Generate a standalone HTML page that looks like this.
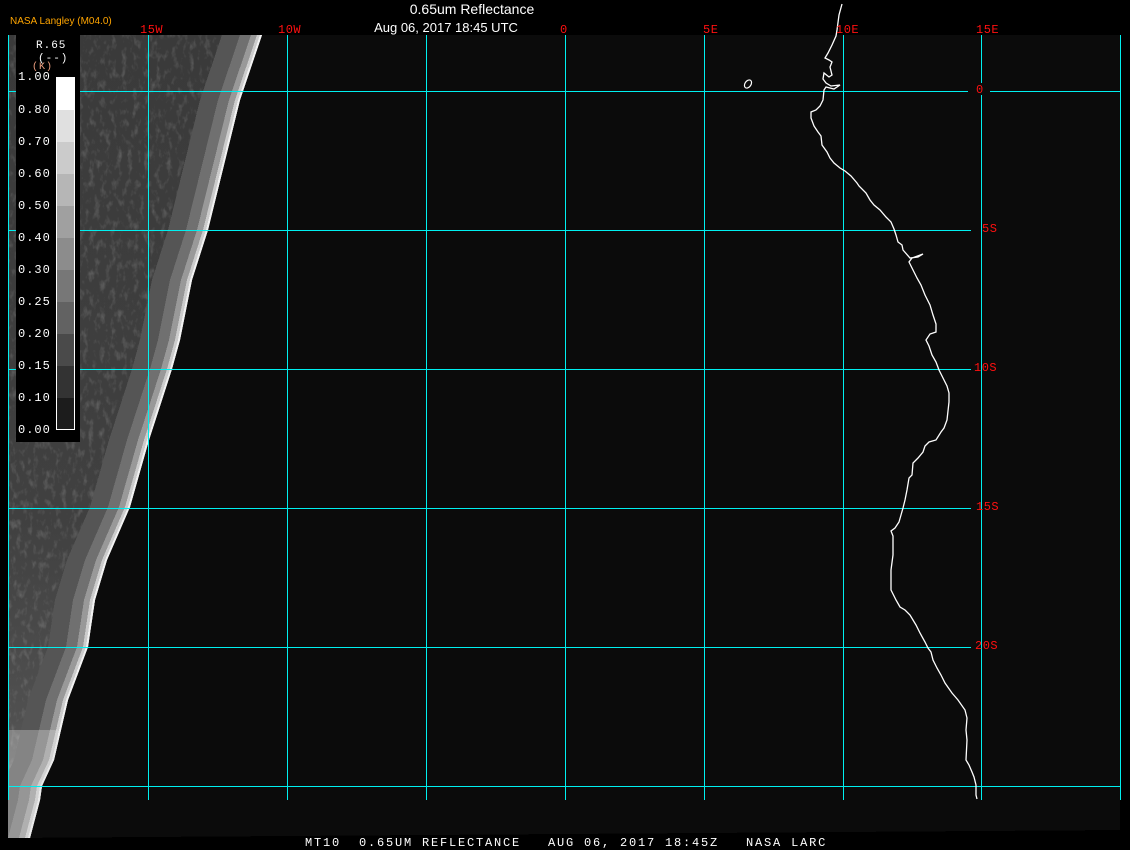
<!DOCTYPE html>
<html><head><meta charset="utf-8"><style>
html,body{margin:0;padding:0;background:#000;}
body{width:1130px;height:850px;position:relative;overflow:hidden;font-family:"Liberation Mono",monospace;}
.t{position:absolute;white-space:pre;}
</style></head><body>
<svg width="1130" height="850" style="position:absolute;left:0;top:0" shape-rendering="crispEdges">
<defs>
<filter id="n" x="0" y="0" width="100%" height="100%">
<feTurbulence type="fractalNoise" baseFrequency="0.18 0.1" numOctaves="3" seed="4"/>
<feColorMatrix type="matrix" values="0 0 0 0 1  0 0 0 0 1  0 0 0 0 1  0 0 0 1.4 -0.7"/>
</filter>
<clipPath id="cl"><polygon points="8,35 262,35 240,100 208,230 192,280 180,340 172,369 162,400 149,440 130,507 107,560 95,600 88,647 68,700 54,760 42,786 40,800 30,838 8,838"/></clipPath>
<linearGradient id="vg" x1="0" y1="0" x2="0" y2="1">
<stop offset="0" stop-color="#3a3a3a"/><stop offset="0.6" stop-color="#404040"/><stop offset="0.85" stop-color="#505050"/><stop offset="1" stop-color="#707070"/>
</linearGradient>
</defs>
<polygon points="8,35 1120,35 1120,830 8,838" fill="#0b0b0b"/>
<g clip-path="url(#cl)">
<rect x="8" y="35" width="260" height="805" fill="url(#vg)"/>
<rect x="8" y="35" width="260" height="805" filter="url(#n)" opacity="0.3"/>
<g transform="translate(-40,0)"><polygon points="262,35 240,100 208,230 192,280 180,340 172,369 162,400 149,440 130,507 107,560 95,600 88,647 68,700 54,760 42,786 40,800 30,838 400,838 400,35" fill="#555"/></g>
<g transform="translate(-22,0)"><polygon points="262,35 240,100 208,230 192,280 180,340 172,369 162,400 149,440 130,507 107,560 95,600 88,647 68,700 54,760 42,786 40,800 30,838 400,838 400,35" fill="#707070"/></g>
<g transform="translate(-11,0)"><polygon points="262,35 240,100 208,230 192,280 180,340 172,369 162,400 149,440 130,507 107,560 95,600 88,647 68,700 54,760 42,786 40,800 30,838 400,838 400,35" fill="#999"/></g>
<g transform="translate(-5,0)"><polygon points="262,35 240,100 208,230 192,280 180,340 172,369 162,400 149,440 130,507 107,560 95,600 88,647 68,700 54,760 42,786 40,800 30,838 400,838 400,35" fill="#ccc"/></g>
<g transform="translate(-2,0)"><polygon points="262,35 240,100 208,230 192,280 180,340 172,369 162,400 149,440 130,507 107,560 95,600 88,647 68,700 54,760 42,786 40,800 30,838 400,838 400,35" fill="#f2f2f2"/></g>
<rect x="8" y="730" width="50" height="110" fill="#ddd" opacity="0.35"/>
</g>
<g stroke="#00f0f0" stroke-width="1" fill="none">
<line x1="8.5" y1="35" x2="8.5" y2="800"/>
<line x1="1120.5" y1="35" x2="1120.5" y2="800"/>
<line x1="148.5" y1="35" x2="148.5" y2="800"/><line x1="287.5" y1="35" x2="287.5" y2="800"/>
<line x1="426.5" y1="35" x2="426.5" y2="800"/><line x1="565.5" y1="35" x2="565.5" y2="800"/>
<line x1="704.5" y1="35" x2="704.5" y2="800"/><line x1="843.5" y1="35" x2="843.5" y2="800"/>
<line x1="981.5" y1="35" x2="981.5" y2="83"/><line x1="981.5" y1="95" x2="981.5" y2="800"/>
<line x1="8" y1="91.5" x2="968" y2="91.5"/><line x1="990" y1="91.5" x2="1120" y2="91.5"/>
<line x1="8" y1="230.5" x2="971" y2="230.5"/><line x1="8" y1="369.5" x2="971" y2="369.5"/>
<line x1="8" y1="508.5" x2="971" y2="508.5"/><line x1="8" y1="647.5" x2="971" y2="647.5"/>
<line x1="8" y1="786.5" x2="1120" y2="786.5"/>
</g>
<polyline fill="none" stroke="#fff" stroke-width="1.3" shape-rendering="auto" points="842,4 839,15 837,30 836,36 832,45 828,53 825,58 829,60 832,62 830,67 832,75 829,77 824,73 823,79 826,83 831,86 840,85 834,89 826,87 824,90 823,100 820,106 816,110 811,112 811,118 814,126 818,132 821,136 822,145 827,152 830,158 834,163 840,168 845,171 851,176 857,183 859,186 866,193 870,200 874,205 880,210 886,217 891,222 894,229 896,235 898,242 902,245 903,250 910,258 918,257 923,254 912,258 909,262 913,270 917,278 921,285 925,295 930,305 933,315 936,324 936,332 930,334 926,340 929,346 932,355 936,362 939,370 943,378 947,386 949,393 949,402 947,420 944,428 941,432 936,440 929,442 925,446 923,452 918,458 913,463 912,475 909,478 907,490 905,500 903,508 901,515 899,522 895,528 891,531 893,536 893,555 891,570 891,590 896,600 900,607 905,610 910,615 916,625 920,633 925,642 928,648 931,652 933,660 937,668 941,675 945,683 952,693 958,700 965,710 967,718 966,730 967,740 966,760 969,765 972,772 974,777 976,785 976,795 977,799"/>
<ellipse cx="748" cy="84" rx="3" ry="4.5" transform="rotate(35 748 84)" fill="none" stroke="#fff" stroke-width="1.2" shape-rendering="auto"/>
<rect x="16" y="35" width="64" height="407" fill="#000"/>
<g>
<rect x="56" y="77" width="19" height="33" fill="#fff"/>
<rect x="56" y="110" width="19" height="32" fill="#e0e0e0"/>
<rect x="56" y="142" width="19" height="32" fill="#cbcbcb"/>
<rect x="56" y="174" width="19" height="32" fill="#b6b6b6"/>
<rect x="56" y="206" width="19" height="32" fill="#a0a0a0"/>
<rect x="56" y="238" width="19" height="32" fill="#8c8c8c"/>
<rect x="56" y="270" width="19" height="32" fill="#777"/>
<rect x="56" y="302" width="19" height="32" fill="#626262"/>
<rect x="56" y="334" width="19" height="32" fill="#4a4a4a"/>
<rect x="56" y="366" width="19" height="32" fill="#333"/>
<rect x="56" y="398" width="19" height="32" fill="#1c1c1c"/>
<rect x="56.5" y="77.5" width="18" height="352" fill="none" stroke="#fff" stroke-width="1"/>
</g>
</svg>
<div class="t" style="left:10px;top:16px;font-family:'Liberation Sans',sans-serif;font-size:10px;color:#ffa500">NASA Langley (M04.0)</div>
<div class="t" style="left:372px;top:1px;width:200px;text-align:center;font-family:'Liberation Sans',sans-serif;font-size:14px;color:#fff">0.65um Reflectance</div>
<div class="t" style="left:346px;top:20px;width:200px;text-align:center;font-family:'Liberation Sans',sans-serif;font-size:13px;color:#fff">Aug 06, 2017 18:45 UTC</div>
<div style="font-size:12px;color:#ff1010;letter-spacing:0.5px">
<div class="t" style="left:140px;top:23px">15W</div>
<div class="t" style="left:278px;top:23px">10W</div>
<div class="t" style="left:560px;top:23px">0</div>
<div class="t" style="left:703px;top:23px">5E</div>
<div class="t" style="left:836px;top:23px">10E</div>
<div class="t" style="left:976px;top:23px">15E</div>
<div class="t" style="left:976px;top:83px">0</div>
<div class="t" style="left:982px;top:222px">5S</div>
<div class="t" style="left:974px;top:361px">10S</div>
<div class="t" style="left:976px;top:500px">15S</div>
<div class="t" style="left:975px;top:639px">20S</div>
</div>
<div style="font-size:11px;color:#fff;letter-spacing:1px">
<div class="t" style="left:36px;top:40px">R.65</div>
<div class="t" style="left:38px;top:53px">(--)</div>
<div class="t" style="left:32px;top:62px;color:#f0a080;font-size:10px">(K)</div>
<div class="t" style="left:18px;top:70px;font-size:12px">1.00</div>
<div class="t" style="left:18px;top:103px;font-size:12px">0.80</div>
<div class="t" style="left:18px;top:135px;font-size:12px">0.70</div>
<div class="t" style="left:18px;top:167px;font-size:12px">0.60</div>
<div class="t" style="left:18px;top:199px;font-size:12px">0.50</div>
<div class="t" style="left:18px;top:231px;font-size:12px">0.40</div>
<div class="t" style="left:18px;top:263px;font-size:12px">0.30</div>
<div class="t" style="left:18px;top:295px;font-size:12px">0.25</div>
<div class="t" style="left:18px;top:327px;font-size:12px">0.20</div>
<div class="t" style="left:18px;top:359px;font-size:12px">0.15</div>
<div class="t" style="left:18px;top:391px;font-size:12px">0.10</div>
<div class="t" style="left:18px;top:423px;font-size:12px">0.00</div>
</div>
<div class="t" style="left:305px;top:836px;font-size:12px;color:#fff;letter-spacing:1.8px">MT10  0.65UM REFLECTANCE   AUG 06, 2017 18:45Z   NASA LARC</div>
</body></html>
